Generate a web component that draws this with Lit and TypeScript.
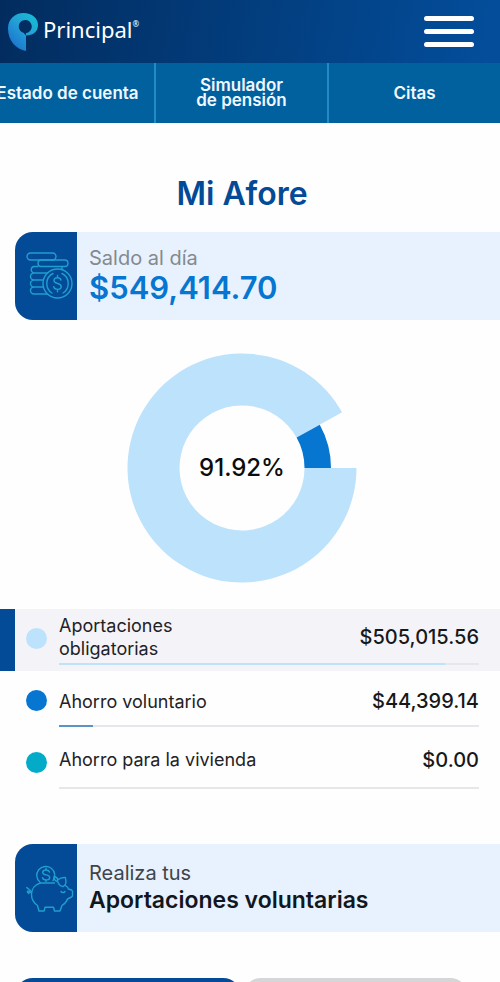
import { LitElement, html, svg, css } from "lit";
import { customElement, property } from "lit/decorators.js";
import { classMap } from "lit/directives/class-map.js";
import { styleMap } from "lit/directives/style-map.js";

interface Account {
  name: string;
  amount: string;
  share: number;
  tone: "light" | "blue" | "teal";
  selected?: boolean;
}

const ACCOUNTS: Account[] = [
  { name: "Aportaciones obligatorias", amount: "$505,015.56", share: 91.92, tone: "light", selected: true },
  { name: "Ahorro voluntario", amount: "$44,399.14", share: 8.08, tone: "blue" },
  { name: "Ahorro para la vivienda", amount: "$0.00", share: 0, tone: "teal" },
];

const coins = svg`
  <rect x="1" y="1" width="29" height="7" rx="3.5"/>
  <rect x="12" y="8" width="30" height="6.500" rx="3.200"/>
  <path d="M12 14.500H9a3.200 3.200 0 0 0-1 6.500h28M8 21a3.400 3.400 0 0 0 0 7h14M8 28a3.400 3.400 0 0 0 0 7h12M8 35a3.400 3.400 0 0 0 0 7h15M36 14.500v4"/>
  <circle class="face" cx="31.500" cy="31.500" r="14.500"/>
  <path d="M27 21.500a11.200 11.200 0 0 0-1 19.500M36 21.500a11.200 11.200 0 0 1 1 19.500"/>
  <path d="M35 28c-.5-1.600-1.800-2.300-3.500-2.300c-2 0-3.500 1.200-3.500 2.800c0 4 7.200 2 7.200 6c0 1.800-1.600 2.900-3.700 2.900c-2 0-3.500-1-3.800-2.700M31.500 23.500v2.200M31.500 37.500v2.300"/>`;

const piggy = svg`
  <path d="M14 18.300a9 9 0 1 1 13-1.600"/>
  <path d="M23.500 8c-.6-1.400-1.800-2-3.400-2c-2 0-3.400 1-3.400 2.400c0 3.400 7 1.600 7 5c0 1.500-1.500 2.500-3.600 2.500c-1.900 0-3.300-.8-3.600-2.300M20 4v2M20 16v1.500"/>
  <path d="M28.500 19H14.500C9 20.500 5.500 25 5.500 30.500C5.500 35.500 8 39 11.500 41.500L13 47H18L19 43.200H27.500L28.500 47H34L36 41.500C38.500 40 40.500 38 41.500 35L45.500 33C46.200 32.600 46.500 32.200 46.500 31.500V27.500C46.500 26.800 46 26.300 45.500 26L42.500 25C42 23.500 41 22.500 39.500 21.500"/>
  <path d="M31.500 16C34 14 36.500 13.200 39.300 13.500C40.500 17 40 20.500 37.500 22.500C34.500 22.500 31.500 20 31.500 16ZM31.500 17.500C29 17 27.800 15 28 12.500C30 13 31.500 14 31.800 15.500"/>
  <path d="M35 27.500c1 1.500 3 1.500 4 0"/>
  <path d="M5.500 28C3.500 29.500 1 29 1.500 27.500C2.200 26.200 4.500 27.500 2.500 29.500M4.800 27.500C4.500 25.500 2.500 25.500 .8 23.500"/>`;

@customElement("info-card")
export class InfoCard extends LitElement {
  @property() icon: "coins" | "piggy" = "coins";

  static styles = css`
    :host { display: flex; min-height: 88px; margin-left: 15px; border-radius: 18px 0 0 18px; overflow: hidden; background: #e7f2fe; }
    .badge { flex: none; width: 62px; display: flex; align-items: center; justify-content: center; background: #034a97; }
    .glyph { width: 48px; height: 48px; margin-left: 8px; fill: none; stroke: #209fce; stroke-width: 1.4; stroke-linecap: round; stroke-linejoin: round; }
    .face { fill: #034a97; }
    .body { flex: 1; display: flex; flex-direction: column; justify-content: center; padding-left: 12px; }
  `;

  render() {
    return html`
      <div class="badge">
        <svg class="glyph" viewBox="0 0 48 48" aria-hidden="true">${this.icon === "coins" ? coins : piggy}</svg>
      </div>
      <div class="body"><slot></slot></div>
    `;
  }
}

@customElement("share-donut")
export class ShareDonut extends LitElement {
  @property({ type: Number }) share = 0;

  static styles = css`
    :host { display: grid; place-items: center; }
    .ring, .value { grid-area: 1 / 1; }
    .ring { width: 230px; height: 230px; display: block; }
    .main { fill: #bde2fc; }
    .rest { fill: #0676d1; }
    .value { font-size: 24px; line-height: 28px; font-weight: 500; color: #0c0c0e; }
  `;

  private arc(from: number, to: number, outer: number, inner: number) {
    const at = (deg: number, r: number) => {
      const a = (deg * Math.PI) / 180;
      return `${(115 + r * Math.cos(a)).toFixed(2)} ${(115 - r * Math.sin(a)).toFixed(2)}`;
    };
    const large = to - from > 180 ? 1 : 0;
    return `M${at(from, outer)}A${outer} ${outer} 0 ${large} 0 ${at(to, outer)}L${at(to, inner)}A${inner} ${inner} 0 ${large} 1 ${at(from, inner)}Z`;
  }

  render() {
    const gap = (1 - this.share / 100) * 360;
    return html`
      <svg class="ring" viewBox="0 0 230 230" aria-hidden="true">
        <path class="main" d=${this.arc(gap, 360, 114.5, 62.5)} />
        <path class="rest" d=${this.arc(0, gap, 89, 62.5)} />
      </svg>
      <span class="value">${this.share}%</span>
    `;
  }
}

@customElement("app-root")
export class AppRoot extends LitElement {
  static styles = css`
    :host { display: block; height: 100vh; overflow: hidden; background: #fefefe; color: #222226; font-family: Inter, "Liberation Sans", sans-serif; }
    .top { display: flex; align-items: center; justify-content: space-between; height: 63px; padding: 0 26px 0 8px; box-sizing: border-box; background: linear-gradient(100deg, #022c5e, #034e9c); }
    .brand { display: flex; align-items: center; gap: 4px; color: #fff; text-decoration: none; }
    .mark { width: 31px; height: 38px; }
    .word { font-family: "Noto Sans", sans-serif; font-size: 22px; line-height: 28px; padding-bottom: 6px; display: flex; }
    .reg { font-size: 8px; line-height: 18px; }
    .menu { display: flex; flex-direction: column; gap: 8px; width: 50px; padding: 0; border: 0; background: none; }
    .line { height: 5px; border-radius: 3px; background: #fff; }
    .tabs { display: grid; grid-template-columns: repeat(3, 1fr); margin-left: -19px; height: 60px; background: #01619f; }
    .tab { display: flex; align-items: center; justify-content: center; text-align: center; color: #f0f8ff; text-decoration: none; font-size: 17px; line-height: 15px; font-weight: 600; }
    .tab + .tab { border-left: 2px solid #218bc7; }
    .title { margin: 52px 16px 20px 0; text-align: center; font-size: 32px; line-height: 37px; font-weight: 600; color: #034a97; }
    .muted { font-size: 20px; line-height: 24px; color: #85898f; }
    .balance { font-size: 31px; line-height: 36px; font-weight: 600; color: #0676d1; }
    .lead { font-size: 20px; line-height: 24px; color: #3f444b; }
    .strong { font-size: 23px; line-height: 30px; font-weight: 600; color: #12171e; }
    .chart { margin: 33px 16px 26px 0; }
    .list { list-style: none; margin: 0; padding: 0; }
    .row { display: grid; grid-template-columns: 22px 1fr; column-gap: 11px; padding: 0 21px 0 26px; }
    .row.selected { padding: 2px 21px 6px 11px; border-left: 15px solid #034a97; background: #f4f4f8; }
    .dot { width: 21px; height: 21px; border-radius: 50%; align-self: end; margin-bottom: 14px; }
    .light { background: #bde2fc; }
    .blue { background: #0676d1; }
    .teal { background: #03abc9; }
    .entry { display: flex; align-items: center; justify-content: space-between; box-sizing: border-box; height: 60px; padding-top: 5px; }
    .selected .entry { height: 52px; padding-top: 0; }
    .selected + .row .entry { height: 54px; padding-top: 6px; }
    .name { font-size: 18px; line-height: 23px; }
    .selected .name { max-width: 130px; }
    .amount { font-size: 20px; line-height: 24px; font-weight: 500; color: #18181b; }
    .track { grid-column: 2; height: 2px; background: #e6e7ea; }
    .fill { height: 2px; }
    .fill.blue { background: #5b93c6; }
    .cta { display: flex; margin-top: 55px; margin-bottom: 46px; color: inherit; text-decoration: none; }
    .wide { flex: 1; }
    .actions { display: flex; gap: 2px; padding: 0 32px 0 15px; }
    .pill { flex: 1; height: 60px; border: 0; border-radius: 18px; background: #d6d6d8; }
    .pill.on { background: #034a97; }
  `;

  render() {
    return html`
      <header class="top">
        <a class="brand" href="#">
          <svg class="mark" viewBox="0 0 31 38" aria-hidden="true">
            <defs>
              <linearGradient id="g" x1="1" y1="0" x2="0.2" y2="1">
                <stop offset="0" stop-color="#12c3d3" />
                <stop offset="0.5" stop-color="#249fd6" />
                <stop offset="1" stop-color="#1a6fcd" />
              </linearGradient>
            </defs>
            <path fill="url(#g)" fill-rule="evenodd" d="M18 38C8 36 0 28 0 15.500C0 6 7 0 15.500 0C24 0 30 5 30 12C30 18.500 25 22.500 18 22.500ZM18 22.500L15.500 19.800A6.500 6.500 0 1 1 18 20Z" />
          </svg>
          <span class="word">Principal<span class="reg">®</span></span>
        </a>
        <button class="menu" aria-label="Menú">
          <span class="line"></span><span class="line"></span><span class="line"></span>
        </button>
      </header>
      <nav class="tabs">
        <a class="tab" href="#">Estado de cuenta</a>
        <a class="tab" href="#">Simulador<br />de pensión</a>
        <a class="tab" href="#">Citas</a>
      </nav>
      <main>
        <h1 class="title">Mi Afore</h1>
        <info-card icon="coins">
          <span class="muted">Saldo al día</span>
          <span class="balance">$549,414.70</span>
        </info-card>
        <share-donut class="chart" share="91.92"></share-donut>
        <ul class="list">
          ${ACCOUNTS.map(
            (a) => html`
              <li class=${classMap({ row: true, selected: !!a.selected })}>
                <span class=${classMap({ dot: true, [a.tone]: true })}></span>
                <div class="entry">
                  <span class="name">${a.name}</span>
                  <span class="amount">${a.amount}</span>
                </div>
                <div class="track">
                  <div class=${classMap({ fill: true, [a.tone]: true })} style=${styleMap({ width: `${a.share}%` })}></div>
                </div>
              </li>
            `
          )}
        </ul>
        <a class="cta" href="#">
          <info-card class="wide" icon="piggy">
            <span class="lead">Realiza tus</span>
            <span class="strong">Aportaciones voluntarias</span>
          </info-card>
        </a>
        <div class="actions">
          <button class="pill on"></button>
          <button class="pill"></button>
        </div>
      </main>
    `;
  }
}
